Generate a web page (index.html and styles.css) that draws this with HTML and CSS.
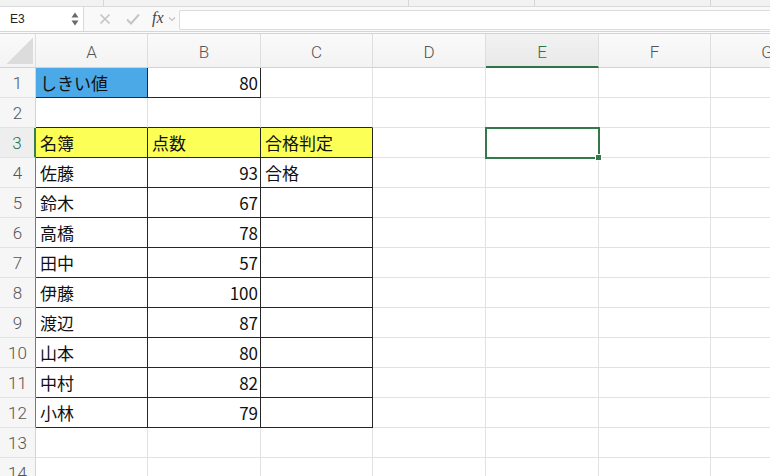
FILE: index.html
```html
<!DOCTYPE html>
<html lang="ja">
<head>
<meta charset="utf-8">
<link rel="stylesheet" href="styles.css">
</head>
<body>
<div class="app">
  <div class="topstrip">
    <div class="seg s1"></div>
    <div class="seg s2"></div>
    <div class="seg s3"></div>
    <div class="seg s4"></div>
    <div class="seg s5"></div>
  </div>
  <div class="fbar">
    <div class="namebox">
      <span class="nb-text">E3</span>
      <svg class="nb-arrows" width="8" height="16" viewBox="0 0 8 16"><path d="M4 1.5 L7.5 6.5 H0.5 Z" fill="#6a6a6a"/><path d="M4 14.5 L7.5 9.5 H0.5 Z" fill="#6a6a6a"/></svg>
    </div>
    <div class="fbtns">
      <svg class="ic-x" width="12" height="12" viewBox="0 0 12 12"><path d="M1.5 1.5 L10.5 10.5 M10.5 1.5 L1.5 10.5" stroke="#c4c4c4" stroke-width="1.7" fill="none"/></svg>
      <svg class="ic-ok" width="14" height="12" viewBox="0 0 14 12"><path d="M1 6.5 L5 10.5 L13 1.5" stroke="#c4c4c4" stroke-width="1.9" fill="none"/></svg>
      <span class="fx">fx</span>
      <svg class="ic-chev" width="8" height="6" viewBox="0 0 8 6"><path d="M1 1.5 L4 4.5 L7 1.5" stroke="#c0c0c0" stroke-width="1.1" fill="none"/></svg>
    </div>
    <div class="finput"></div>
  </div>
  <div class="gap"></div>
  <div class="grid">
    <div class="ch corner"><div class="tri"></div></div>
    <div class="ch">A</div><div class="ch">B</div><div class="ch">C</div><div class="ch">D</div><div class="ch sel">E</div><div class="ch">F</div><div class="ch">G</div>

    <div class="rh">1</div>
    <div class="c blue br bb">しきい値</div><div class="c num br bb">80</div><div class="c"></div><div class="c"></div><div class="c"></div><div class="c"></div><div class="c"></div>

    <div class="rh">2</div>
    <div class="c bb"></div><div class="c bb"></div><div class="c bb"></div><div class="c"></div><div class="c"></div><div class="c"></div><div class="c"></div>

    <div class="rh sel">3</div>
    <div class="c yel br bb">名簿</div><div class="c yel br bb">点数</div><div class="c yel br bb">合格判定</div><div class="c"></div><div class="c active"></div><div class="c"></div><div class="c"></div>

    <div class="rh tl">4</div>
    <div class="c br bb">佐藤</div><div class="c num br bb">93</div><div class="c br bb">合格</div><div class="c"></div><div class="c"></div><div class="c"></div><div class="c"></div>

    <div class="rh tl">5</div>
    <div class="c br bb">鈴木</div><div class="c num br bb">67</div><div class="c br bb"></div><div class="c"></div><div class="c"></div><div class="c"></div><div class="c"></div>

    <div class="rh tl">6</div>
    <div class="c br bb">高橋</div><div class="c num br bb">78</div><div class="c br bb"></div><div class="c"></div><div class="c"></div><div class="c"></div><div class="c"></div>

    <div class="rh tl">7</div>
    <div class="c br bb">田中</div><div class="c num br bb">57</div><div class="c br bb"></div><div class="c"></div><div class="c"></div><div class="c"></div><div class="c"></div>

    <div class="rh tl">8</div>
    <div class="c br bb">伊藤</div><div class="c num br bb">100</div><div class="c br bb"></div><div class="c"></div><div class="c"></div><div class="c"></div><div class="c"></div>

    <div class="rh tl">9</div>
    <div class="c br bb">渡辺</div><div class="c num br bb">87</div><div class="c br bb"></div><div class="c"></div><div class="c"></div><div class="c"></div><div class="c"></div>

    <div class="rh tl">10</div>
    <div class="c br bb">山本</div><div class="c num br bb">80</div><div class="c br bb"></div><div class="c"></div><div class="c"></div><div class="c"></div><div class="c"></div>

    <div class="rh tl">11</div>
    <div class="c br bb">中村</div><div class="c num br bb">82</div><div class="c br bb"></div><div class="c"></div><div class="c"></div><div class="c"></div><div class="c"></div>

    <div class="rh tl">12</div>
    <div class="c br bb">小林</div><div class="c num br bb">79</div><div class="c br bb"></div><div class="c"></div><div class="c"></div><div class="c"></div><div class="c"></div>

    <div class="rh">13</div>
    <div class="c"></div><div class="c"></div><div class="c"></div><div class="c"></div><div class="c"></div><div class="c"></div><div class="c"></div>

    <div class="rh">14</div>
    <div class="c"></div><div class="c"></div><div class="c"></div><div class="c"></div><div class="c"></div><div class="c"></div><div class="c"></div>
  </div>
</div>
</body>
</html>
```

FILE: styles.css
```css
html, body {
  margin: 0;
  padding: 0;
  background: #ffffff;
  overflow: hidden;
}
.app {
  width: 770px;
  height: 476px;
  overflow: hidden;
  font-family: "Liberation Sans", Arial, sans-serif;
}
.topstrip {
  display: flex;
  height: 6px;
  background: #f2f2f2;
  border-bottom: 1px solid #dadada;
}
.seg {
  height: 6px;
  border-right: 1px solid #d6d6d6;
  box-sizing: border-box;
}
.s1 { width: 104px; }
.s2 { width: 305px; }
.s3 { width: 126px; }
.s4 { width: 176px; }
.s5 { flex: 1; border-right: none; }

.fbar {
  display: flex;
  height: 24px;
  background: #f9f9f9;
  border-bottom: 1px solid #d6d6d6;
}
.namebox {
  width: 84px;
  background: #ffffff;
  border-right: 1px solid #d9d9d9;
  display: flex;
  align-items: center;
  justify-content: space-between;
  padding: 0 4px 0 10px;
  box-sizing: border-box;
}
.nb-text {
  font-size: 12px;
  color: #222;
}
.fbtns {
  width: 95px;
  display: flex;
  align-items: center;
  padding-left: 15px;
  box-sizing: border-box;
}
.ic-x { margin-right: 15px; }
.ic-ok { margin-right: 12px; }
.fx {
  font-family: "Liberation Serif", "DejaVu Serif", serif;
  font-style: italic;
  font-size: 16px;
  color: #444;
  margin-right: 4px;
  position: relative;
  top: -1px;
}
.finput {
  flex: 1;
  margin: 3px 0 1px 0;
  background: #ffffff;
  border: 1px solid #dcdcdc;
  border-right: none;
  border-radius: 2px 0 0 2px;
}
.gap {
  height: 1px;
  border-bottom: 1px solid #d4d4d4;
  background: #fbfbfb;
}

.grid {
  display: grid;
  grid-template-columns: 36px 112px 113px 112px 113px 113px 112px 113px;
  grid-template-rows: 34px repeat(14, 30px);
  width: 824px;
}
.ch, .rh {
  box-sizing: border-box;
  background: linear-gradient(#fafafa, #f3f3f3);
  color: #555;
  display: flex;
  align-items: center;
  justify-content: center;
  border-right: 1px solid #dedede;
  border-bottom: 1px solid #d2d2d2;
  font-family: Roboto, "Liberation Sans", sans-serif;
  font-weight: 300;
}
.ch {
  font-size: 17px;
  padding-top: 2px;
}
.rh {
  font-size: 17px;
  background: #f6f6f6;
  border-bottom: 1px solid #e2e2e2;
  border-right: 1px solid #d4d4d4;
}
.ch.sel {
  background: linear-gradient(#f2f2f2, #e9e9e9);
  color: #2c7348;
  border-bottom: 2px solid #2f7446;
  padding-top: 3px;
}
.rh.sel {
  color: #2c7348;
  background: #eeeeee;
  border-right: 2px solid #3a7d50;
}
.rh.tl {
  border-right: 1px solid #7a7a7a;
}
.corner {
  align-items: flex-end;
  justify-content: flex-end;
  padding: 0 2px 3px 0;
}
.tri {
  width: 26px;
  height: 27px;
  background: linear-gradient(to bottom right, transparent 50%, #dcdcdc 50%);
}

.c {
  box-sizing: border-box;
  border-right: 1px solid #e2e2e2;
  border-bottom: 1px solid #e2e2e2;
  display: flex;
  align-items: center;
  padding: 0 2px 0 4px;
  font-family: "Noto Sans CJK JP", "Noto Sans", sans-serif;
  font-size: 17px;
  color: #111;
  white-space: nowrap;
  overflow: hidden;
}
.c.num { justify-content: flex-end; }
.c.br { border-right-color: #262626; }
.c.bb { border-bottom-color: #262626; }
.c.blue { background: #4ba9e7; }
.c.yel { background: #fcff55; }
.c.active {
  position: relative;
  overflow: visible;
  outline: 2px solid #33794b;
  outline-offset: -1px;
  z-index: 2;
}
.c.active::after {
  content: "";
  position: absolute;
  right: -4px;
  bottom: -4px;
  width: 5px;
  height: 5px;
  background: #33794b;
  border: 1px solid #ffffff;
}
```
